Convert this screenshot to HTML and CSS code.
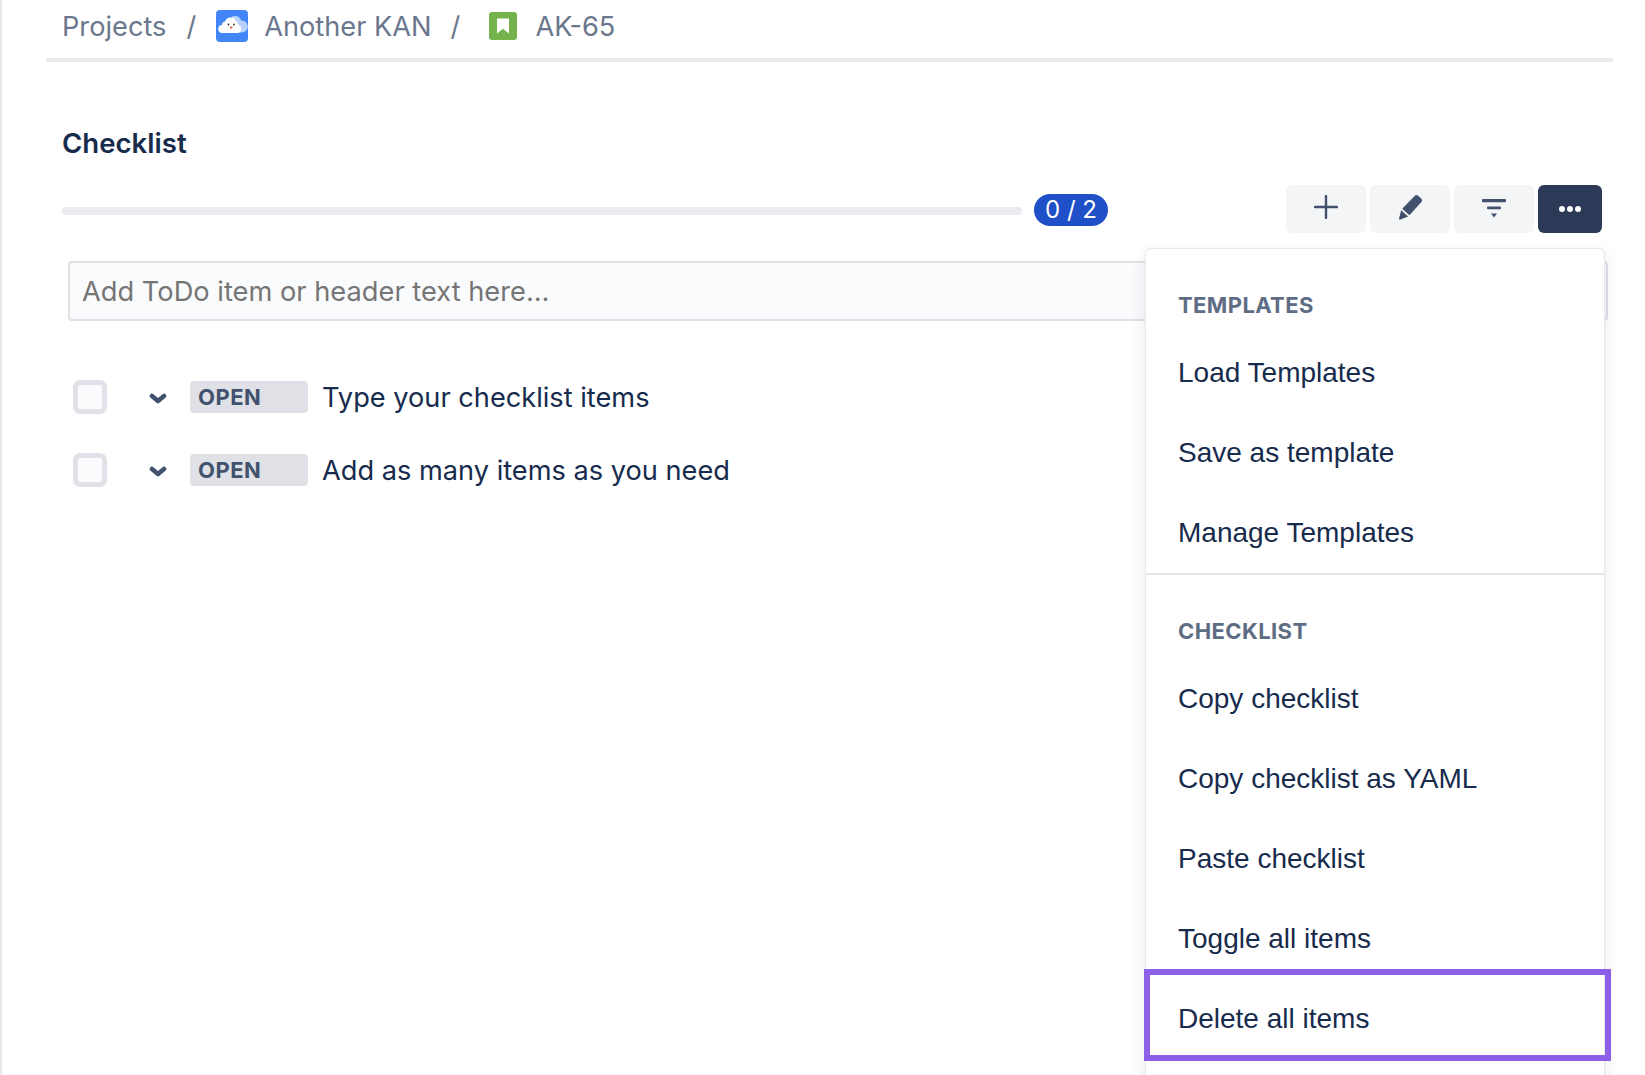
FILE: index.html
```html
<!DOCTYPE html>
<html lang="en">
<head>
<meta charset="utf-8">
<title>Checklist</title>
<link rel="stylesheet" href="styles.css">
</head>
<body>
<div class="page">
  <nav class="crumbs">
    <span class="crumb">Projects</span>
    <span class="sep first">/</span>
    <svg class="avatar" viewBox="0 0 32 32" aria-hidden="true">
      <rect width="32" height="32" rx="4" fill="#4285f6"/>
      <path d="M14 9a6 6 0 0 1 11 1.500a5.500 5.500 0 0 1 1.500 12H14z" fill="#b9d2fb"/>
      <path d="M6.500 23a4 4 0 0 1-.5-8a3.500 3.500 0 0 1 3-3.500a6 6 0 0 1 11.500 0.500a3.500 3.500 0 0 1 2 3a4.200 4.200 0 0 1-.5 8z" fill="#fff"/>
      <circle cx="12.500" cy="14.500" r=".9" fill="#333"/><circle cx="18" cy="14.500" r=".9" fill="#333"/>
      <ellipse cx="15.200" cy="17.500" rx="1.400" ry="1.100" fill="#e8574c"/>
    </svg>
    <span class="crumb">Another KAN</span>
    <span class="sep second">/</span>
    <svg class="story" viewBox="0 0 28 28" aria-hidden="true">
      <rect width="28" height="28" rx="3" fill="#74b24c"/>
      <path d="M8 6.500h12v15l-6-4.800l-6 4.800z" fill="#fff"/>
    </svg>
    <span class="crumb">AK-65</span>
  </nav>

  <main class="panel">
    <h1 class="title">Checklist</h1>
    <div class="toolbar">
      <div class="progress"></div>
      <span class="count">0 / 2</span>
      <div class="actions">
        <button class="tool" aria-label="Add">
          <svg viewBox="0 0 24 24" width="24" height="24"><path d="M12 1v22M1 12h22" stroke="#42526e" stroke-width="2.400" stroke-linecap="round" fill="none"/></svg>
        </button>
        <button class="tool" aria-label="Edit">
          <svg viewBox="0 0 24 24" width="26" height="26"><path d="M16.500 1.500q1.500-1 3 0l3 2.800q1.300 1.400 0 3L11.500 19.500 4.800 13.500zM3.800 15l6.500 5.800-7 2.800q-1.800.5-1.300-1.300z" fill="#42526e"/></svg>
        </button>
        <button class="tool filter" aria-label="Filter">
          <svg viewBox="0 0 24 20" width="24" height="20"><rect y="0" width="24" height="3.200" rx="1" fill="#42526e"/><rect x="5" y="7.500" width="14" height="2.800" rx="1" fill="#42526e"/><path d="M9 14.500h6L12 18.500z" fill="#42526e"/></svg>
        </button>
        <button class="tool active" aria-label="More">
          <svg viewBox="0 0 24 8" width="24" height="8"><circle cx="4" cy="4" r="3" fill="#fff"/><circle cx="12" cy="4" r="3" fill="#fff"/><circle cx="20" cy="4" r="3" fill="#fff"/></svg>
        </button>
      </div>
    </div>

    <div class="entry">Add ToDo item or header text here...</div>

    <ul class="items">
      <li class="item">
        <span class="box"></span>
        <svg class="chev" viewBox="0 0 18 11"><path d="M3 3L9 8l6-5" fill="none" stroke="#42526e" stroke-width="4.600" stroke-linecap="round" stroke-linejoin="round"/></svg>
        <span class="status">OPEN</span>
        <span class="label">Type your checklist items</span>
      </li>
      <li class="item">
        <span class="box"></span>
        <svg class="chev" viewBox="0 0 18 11"><path d="M3 3L9 8l6-5" fill="none" stroke="#42526e" stroke-width="4.600" stroke-linecap="round" stroke-linejoin="round"/></svg>
        <span class="status">OPEN</span>
        <span class="label">Add as many items as you need</span>
      </li>
    </ul>
  </main>

  <aside class="menu">
    <section class="group">
      <h2 class="heading">TEMPLATES</h2>
      <a class="entry-link">Load Templates</a>
      <a class="entry-link">Save as template</a>
      <a class="entry-link">Manage Templates</a>
    </section>
    <section class="group lower">
      <h2 class="heading">CHECKLIST</h2>
      <a class="entry-link">Copy checklist</a>
      <a class="entry-link">Copy checklist as YAML</a>
      <a class="entry-link">Paste checklist</a>
      <a class="entry-link">Toggle all items</a>
      <a class="entry-link marked">Delete all items</a>
    </section>
  </aside>
</div>
</body>
</html>
```
FILE: styles.css
```css
*, *::before, *::after { box-sizing: border-box; }
html, body { margin: 0; height: 100%; background: #fff; }
body { overflow: hidden; }
.page {
  position: relative;
  width: 1645px;
  height: 1075px;
  overflow: hidden;
  border-left: 2px solid #e8e8ea;
  font-family: Inter, "Liberation Sans", sans-serif;
  color: #172b4d;
}
.crumbs {
  display: flex;
  align-items: center;
  height: 62px;
  margin: 0 32px 0 44px;
  padding: 0 0 6px 16px;
  border-bottom: 4px solid #ebecf0;
  font-size: 27.200px;
  color: #6b778c;
}
.crumb { white-space: nowrap; }
.sep { margin: 0 20px; }
.sep.second { margin: 0 29px 0 19px; }
.avatar { width: 32px; height: 32px; margin-right: 16px; }
.story { width: 28px; height: 28px; margin-right: 18px; }
.panel { padding: 0 36px 0 60px; }
.title {
  margin: 0;
  padding-top: 65px;
  font-size: 27.600px;
  line-height: 32px;
  font-weight: 600;
  color: #172b4d;
}
.toolbar {
  display: flex;
  align-items: center;
  margin-top: 26px;
  height: 48px;
}
.progress { width: 960px; height: 8px; border-radius: 4px; background: #ebecf0; margin-top: 4px; }
.count {
  margin: 2px 0 0 12px;
  width: 74px;
  height: 32px;
  border-radius: 16px;
  background: #2050c8;
  color: #fff;
  font-size: 24px;
  line-height: 32px;
  text-align: center;
}
.actions { display: flex; gap: 4px; margin-left: auto; margin-right: 7px; }
.tool {
  display: flex;
  align-items: center;
  justify-content: center;
  width: 80px;
  height: 48px;
  padding: 0 0 4px;
  border: 0;
  border-radius: 6px;
  background: #f4f5f7;
}
.tool.filter { padding: 0; }
.tool.active { width: 64px; background: #2c3a58; padding: 0; }
.entry {
  margin: 28px 0 0 6px;
  width: 1540px;
  height: 60px;
  padding-left: 12px;
  border: 2px solid #dfe1e6;
  border-radius: 4px;
  background: #fafbfc;
  font-size: 27.250px;
  line-height: 57px;
  color: #757575;
}
.items { list-style: none; margin: 0; padding: 0; }
.item { display: flex; align-items: center; height: 33px; margin-top: 40px; }
.item:first-child { margin-top: 59px; }
.box {
  width: 34px;
  height: 34px;
  margin-left: 11px;
  border: 5px solid #e0e2e7;
  border-radius: 7px;
  background: #fafbfc;
}
.chev { width: 18px; height: 11px; margin: 3px 0 0 42px; }
.status {
  width: 118px;
  height: 32px;
  margin-left: 23px;
  padding-left: 8px;
  border-radius: 4px;
  background: #dfe1e6;
  color: #42526e;
  font-size: 22px;
  font-weight: 700;
  letter-spacing: .5px;
  line-height: 32px;
}
.label { margin: 2px 0 0 14px; font-size: 27.200px; color: #172b4d; }
.menu {
  position: absolute;
  left: 1143px;
  top: 248px;
  width: 460px;
  height: 860px;
  border: 1px solid #e6e8ec;
  border-radius: 6px;
  background: #fff;
  box-shadow: 0 6px 16px rgba(9, 30, 66, .1);
  font-family: "Liberation Sans", Arial, sans-serif;
}
.group { padding: 34px 0 0; height: 324px; }
.group.lower { border-top: 2px solid #e4e6ea; height: auto; padding-top: 34px; }
.heading {
  margin: 0 0 6px;
  padding-left: 32px;
  font-family: Inter, "Liberation Sans", sans-serif;
  font-size: 22px;
  line-height: 44px;
  font-weight: 700;
  letter-spacing: .4px;
  color: #5e6c84;
  height: 44px;
}
.entry-link {
  display: block;
  height: 80px;
  padding-left: 32px;
  font-size: 28px;
  line-height: 80px;
  color: #172b4d;
}
.marked { position: relative; }
.marked::after {
  content: "";
  position: absolute;
  left: -2px;
  right: -7px;
  top: -10px;
  height: 92px;
  border: 6px solid #8b5fe8;
}
```
